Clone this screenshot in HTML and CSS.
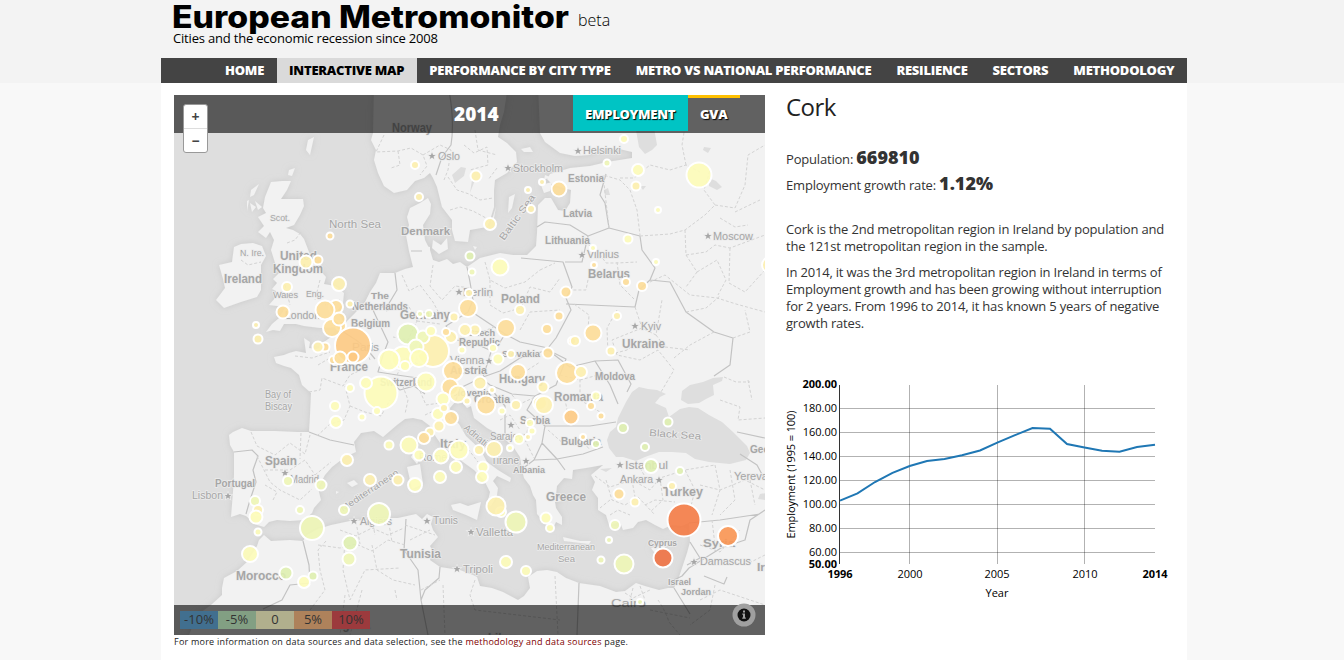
FILE: index.html
```html
<!DOCTYPE html>
<html lang="en">
<head>
<meta charset="utf-8">
<title>European Metromonitor</title>
<link rel="stylesheet" href="styles.css">
</head>
<body>
<header class="site-header">
  <div class="wrap brand">
    <div class="brand-row">
      <svg class="logo" width="400" height="36" viewBox="0 0 400 36"><text x="0" y="27.500" textLength="397" lengthAdjust="spacingAndGlyphs">European Metromonitor</text></svg>
      <span class="beta">beta</span>
    </div>
    <div class="tagline">Cities and the economic recession since 2008</div>
  </div>
  <nav class="wrap nav">
    <a>HOME</a><a class="active">INTERACTIVE MAP</a><a>PERFORMANCE BY CITY TYPE</a><a>METRO VS NATIONAL PERFORMANCE</a><a>RESILIENCE</a><a>SECTORS</a><a>METHODOLOGY</a>
  </nav>
</header>
<main class="wrap content">
  <section class="map-col">
    <div class="map">
      <svg class="map-svg" width="591" height="540" viewBox="174 95 591 540">
        <defs><filter id="coast" x="-5%" y="-5%" width="110%" height="110%"><feDropShadow dx="0" dy="0" stdDeviation="3" flood-color="#c4c4c4" flood-opacity=".8"/></filter></defs>
        <rect x="174" y="95" width="591" height="540" class="sea"/>
        <g class="land" filter="url(#coast)">
          <path d="M780 85H538L540 133 545 142 560 153 575 156 589 155 600 150 615 148 632 152 632 158 607 162 590 166 570 168 550 174 547 179 552 184 560 187 571 190 570 203 565 211 558 210 551 198 545 198 538 205 537 233 536 246 527 255 513 255 500 253 480 258 467 267 460 262 453 264 447 259 439 262 433 260 430 250 425 240 423 225 430 214 431 204 428 198 420 203 410 208 407 217 409 225 406 235 409 251 413 267 405 269 395 273 380 273 376 283 370 292 365 302 356 312 344 324 342 331 331 337 324 342 326 346 316 349 309 348 310 342 304 338 306 353 296 351 289 353 284 355 274 357 276 363 284 366 291 368 299 375 302 385 311 393 310 415 309 432 297 432 275 431 251 431 242 428 233 432 229 435 230 445 234 452 234 475 233 492 231 517 240 514 246 516 252 521 257 525 264 527 269 522 277 520 290 521 304 520 312 513 314 508 321 500 318 488 325 475 332 467 345 457 356 452 354 442 361 433 374 431 383 437 390 431 397 425 405 419 413 418 422 420 430 426 436 437 443 447 452 453 463 462 474 470 484 480 490 492 487 505 491 506 497 495 498 488 493 481 497 476 510 482 511 478 498 470 487 462 480 449 466 436 459 424 451 417 450 408 456 401 462 402 467 408 471 406 474 418 487 428 503 437 514 448 520 457 522 470 524 478 530 486 533 495 536 500 537 514 546 524 553 528 556 522 562 525 562 517 556 508 555 502 562 501 556 495 557 486 564 478 572 479 573 470 586 468 603 465 597 470 591 475 595 482 592 490 598 498 598 510 606 515 609 525 620 522 623 530 633 528 638 522 646 520 655 525 663 529 672 525 682 526 689 523 690 542 687 553 684 562 679 577 674 588 668 588 659 590 645 586 636 583 625 591 616 592 600 586 579 583 566 578 557 572 547 570 537 571 528 577 530 588 524 596 518 600 503 592 492 588 480 586 477 577 473 575 460 570 440 567 430 560 433 552 430 546 438 537 433 530 431 524 433 517 427 514 422 519 416 514 407 516 398 518 390 518 370 520 350 521 331 525 318 529 307 535 303 541 290 540 271 541 264 535 259 540 257 546 247 562 237 571 224 578 222 588 222 595 211 605 197 615 187 640H780Z"/>
          <path d="M374 85 373 133 371 140 376 150 374 160 378 173 384 186 394 193 407 190 415 181 424 178 430 173 433 178 437 187 442 207 452 220 452 230 455 241 468 242 470 230 487 227 491 217 494 207 494 190 495 180 507 173 517 162 516 152 507 143 498 137 500 125 504 112 508 85Z"/>
          <path d="M271 182 282 181 291 181 287 190 281 199 294 199 303 199 304 206 300 215 294 225 286 228 293 230 300 234 304 239 309 252 317 267 326 277 324 284 335 286 344 293 343 303 337 311 342 319 340 327 320 328 304 326 296 324 284 324 280 331 273 330 266 332 272 324 279 318 285 308 277 306 269 305 275 298 276 291 272 289 277 283 273 279 280 272 276 266 271 250 274 240 270 232 266 238 258 232 264 226 258 217 266 213 263 208 265 197Z"/>
          <path d="M234 247 241 244 253 243 262 246 266 256 261 265 261 290 257 297 241 302 224 308 216 300 225 288 223 279 219 265 232 262Z"/>
          <path d="M451 505 460 503 468 506 481 502 477 520 466 515 453 510ZM407 467 420 464 423 484 412 489ZM418 447 421 456 417 464 411 457ZM433 240 441 245 447 238 448 249 439 254 432 248ZM424 246 430 247 430 253 424 252ZM509 197 515 194 512 208 508 213ZM496 207 494 218 491 223ZM563 537 580 541 591 541 589 544 564 541ZM651 548 660 546 670 542 662 551 654 552ZM347 483 354 480 358 484 352 487ZM336 491 339 492 336 494ZM308 140 314 137 310 155 306 150ZM289 170 295 168 292 176 288 175ZM251 190 259 184 254 195 250 197ZM247 201 249 200 247 211ZM255 201 262 207 258 210ZM521 149 530 147 533 152 524 152ZM545 175 550 177 544 180ZM541 185 552 182 550 191 544 193ZM473 246 477 247 475 250ZM250 203 256 207 252 212Z"/>
        </g>
        <g class="sea">
          <path d="M639 387 632 392 626 402 622 410 618 418 616 427 610 432 607 440 609 448 616 457 623 457 636 461 645 457 659 452 672 452 686 453 695 459 709 462 730 464 746 460 750 453 747 446 733 432 722 422 709 415 698 408 689 407 680 409 669 417 666 408 655 403 660 397 666 394 657 390 648 389Z"/>
          <path d="M681 400 682 391 690 385 703 382 713 378 723 377 722 381 713 385 714 395 706 399 699 403 688 404Z"/>
          <path d="M636 130 654 128 657 145 652 150 645 154 639 147ZM704 147 711 148 708 153 703 150ZM709 178 716 181 722 187 717 190 709 186ZM640 186 646 186 643 190ZM452 175 461 167 466 168 464 176 455 183ZM472 180 475 180 470 193ZM600 469 612 468 606 472ZM604 190 608 188 610 195 605 195ZM760 494 766 493 766 500 758 499Z"/>
        </g>
        <g class="border">
          <path d="M448 85Q455 120 451 145L442 157 436 175M234 452 252 450 258 456 253 470 256 482 250 500 246 514M309 432 330 440 354 445M342 331 356 340 366 348 375 359M373 310 380 325 388 342 383 355 378 372 397 375 418 378M395 273 397 290 388 305 373 310M411 251H422M467 267 470 282 473 300 468 312 446 326 457 340 476 344 494 352 505 334 481 318 472 312M505 334 520 342 548 348M548 348 556 338 571 310 566 298 572 287 563 262 521 258M537 227 545 222 570 225 588 236 609 228 605 203 600 195 606 174M609 228 640 236 642 250 655 268 650 280 639 290 635 307 590 305 566 304M650 280 670 282 686 312 714 332 733 338 730 365 714 376M588 236 582 262 565 262M383 377 400 390 414 386 425 394M456 400 460 388 483 377 491 352M483 377 500 371 520 358 548 350 566 359 556 385 535 396 512 394 490 385 480 377M548 350 570 367 595 361 610 385 618 404M595 361 618 360 631 384 627 392M535 396 527 410 545 426 590 426 616 422M545 426 542 443 557 459 583 454 603 447M542 443 534 460 522 469M534 460 557 459 565 470M491 389 505 406 505 436M303 541 309 565 310 583 290 585 282 600 263 609M406 519 404 550 418 570 421 600 428 635M440 567 439 578 425 590 421 600M579 583 577 635M674 588 690 614M674 580 682 576 689 568 721 548 745 540 750 520 765 510M689 523 720 520 760 514M704 576 724 584 727 577M737 432 765 438M740 454 757 465 765 480M690 542 700 558 687 565"/>
        </g>
        <g class="region">
          <path d="M384 135 376 152 398 151 411 148 423 155 427 166 420 175M398 151 400 165 391 168M423 155 440 145 451 150 448 170 444 180M475 130 478 150 497 155M464 145 474 153 487 147 488 165 470 170M448 177 457 190 469 194 480 200 493 198M450 210 460 207 473 211 486 218M497 168 488 180"/>
          <path d="M609 228 603 175 620 180 630 190 637 210 640 235M620 178 634 178 650 165 670 170 686 165 700 172M686 165 682 145 686 120M640 236 670 234 685 230 705 215 715 205 704 190 710 170M685 230 686 255 706 252 715 245 730 248 765 235M686 255 697 272 686 287M730 248 729 283 745 292 765 270M697 272 717 260 726 280 718 295M715 205 735 208 745 185 748 155 765 145M735 212 760 200M720 218 735 227 748 225"/>
          <path d="M650 282 665 275 690 295 717 298 736 304 765 312M686 312 706 308 720 296M714 332 690 345 674 358M733 338 750 332 745 310M635 307 642 328 656 335 662 300M656 335 665 347 690 350M642 328 612 340 617 355 640 360 658 350 674 370 661 392M617 310 607 328 608 355 627 350 640 340M574 304 589 315 588 330M724 377 736 382 750 382M720 400 740 407 738 420 765 418M748 380 752 400"/>
          <path d="M309 392 320 390 322 378 343 386 350 375 361 370M318 365 335 355 353 361M345 386 350 406 344 420 330 424 317 436M350 406 365 412 381 416 390 400M366 348 370 360M295 356 312 358 330 352M251 432 257 446 275 455 290 443 305 454 310 435M257 456 270 482 280 490 300 500 312 489M265 470 290 470 305 460 315 475M273 500 277 492 265 485M301 433 300 459M315 475 331 462"/>
          <path d="M402 275 409 291 420 285 433 302 440 315M433 265 430 286 442 300 455 286 470 288M386 311 408 305 417 321 408 340 393 337M417 321 440 324M485 262 490 280 505 288 525 282 540 270M490 280 490 305 503 313 521 308 530 287 550 292 560 278M540 270 555 263M520 330 530 312 560 310M397 375 405 358 420 365 430 360M463 342 466 330 480 333 498 325M401 381 408 400 405 414M420 391 426 405 440 403M425 415 440 408 450 420M450 445 465 445 478 462"/>
          <path d="M505 380 520 375 540 362M512 395 520 404 535 397M560 375 580 380 580 395 565 400 570 423M580 380 598 375M580 400 600 412M548 430 565 445 580 438 590 450M530 420 525 440 534 458M500 420 510 415 520 430M580 240 597 250 606 263 617 263 637 262M590 270 586 290 572 290M617 262 620 285 635 300"/>
          <path d="M595 476 610 487 632 480 650 490 660 478 685 470 715 465M606 480 612 500 625 505 638 497 655 515M632 480 635 497M660 478 663 500 650 512M685 470 695 490 690 510M700 485 720 490 745 480 765 490M715 465 720 490 712 515M610 500 600 508M640 468 647 480M645 505 655 500 675 502M730 470 735 500 720 515M750 480 755 505M610 515 618 510 630 515M700 545 720 552 740 530M712 520 715 545M720 560 745 565 765 555M700 600 720 590 765 605"/>
          <path d="M326 541 318 550 320 570 325 590 310 610M345 540 343 570 350 600 365 570 400 568M318 545 340 548 356 544 372 551 388 540 405 545M340 530 356 536 372 528 388 535 404 528M356 522 360 544M372 520 375 535M388 518 392 542M372 545 377 570 393 580 415 585M345 595 340 635M443 585 445 635M475 580 470 595 475 610 560 620M555 576 558 635M421 590 440 580M395 590 397 600M185 620H250M405 525 435 535M410 540 430 530M633 588 630 600M640 586 645 600M625 593 633 598 650 590M715 585 710 610 690 625M650 610 690 618M362 590 350 635"/>
          <path d="M287 243 295 240 301 232M241 260 248 265 261 262M285 285 290 305M320 280 315 300M340 300 325 305"/>
        </g>
        <path class="region" d="M658 600Q665 610 669 622L680 635"/>
        <g id="labels" class="labels"></g>
        <g id="bubbles" class="bubbles"></g>
      </svg>
      <div class="topbar">
        <span class="year">2014</span>
        <div class="tabs"><a class="tab tab-on">EMPLOYMENT</a><a class="tab tab-gva">GVA</a></div>
      </div>
      <div class="zoom"><a>+</a><a>−</a></div>
      <div class="bottombar">
        <div class="legend"><span class="l1">-10%</span><span class="l2">-5%</span><span class="l3">0</span><span class="l4">5%</span><span class="l5">10%</span></div>
        <svg class="info" width="24" height="24" viewBox="0 0 24 24"><circle cx="12" cy="12" r="11.5" fill="#a0a0a0"/><circle cx="12" cy="12" r="6.5" fill="#111"/><path d="M11 7.5h2v2h-2zM10.3 10.6H13v4h.8v1.2h-3.6v-1.2h.8v-2.800h-.7z" fill="#a0a0a0"/></svg>
      </div>
    </div>
    <p class="note">For more information on data sources and data selection, see the <a>methodology and data sources</a> page.</p>
  </section>
  <section class="detail">
    <h1>Cork</h1>
    <p class="stat">Population: <b>669810</b></p>
    <p class="stat">Employment growth rate: <b>1.12%</b></p>
    <p class="para first">Cork is the 2nd metropolitan region in Ireland by population and<br>the 121st metropolitan region in the sample.</p>
    <p class="para">In 2014, it was the 3rd metropolitan region in Ireland in terms of<br>Employment growth and has been growing without interruption<br>for 2 years. From 1996 to 2014, it has known 5 years of negative<br>growth rates.</p>
    <svg class="chart" width="400" height="240" viewBox="780 370 400 240">
      <path class="grid" d="M840 408.5H1155M840 432.5H1155M840 456.5H1155M840 480.5H1155M840 504.5H1155M840 528.5H1155M840 552.5H1155M909.5 385V564M997.5 385V564M1084.5 385V564"/>
      <path class="axis" d="M839.5 385V564"/>
      <path class="line" d="M840 500.7 857.5 493.3 875 482 892.5 472.8 909.7 466 927 461 944.500 459 962 455.200 980 450.500 997.300 442.700 1015 435.200 1032.500 428 1050 428.800 1067 444 1084.500 447.500 1102 450.800 1119.500 451.800 1137 447 1155 444.800"/>
      <g class="ticks y"><text x="837" y="388" class="b">200.00</text><text x="837" y="412">180.00</text><text x="837" y="436">160.00</text><text x="837" y="460">140.00</text><text x="837" y="484">120.00</text><text x="837" y="508">100.00</text><text x="837" y="532">80.00</text><text x="837" y="556">60.00</text><text x="837" y="568" class="b">50.00</text></g>
      <g class="ticks x"><text x="840" y="578" class="b">1996</text><text x="910" y="578">2000</text><text x="997" y="578">2005</text><text x="1085" y="578">2010</text><text x="1155" y="578" class="b">2014</text><text x="997" y="597">Year</text><text transform="translate(795 474.500) rotate(-90)" textLength="128">Employment (1995 = 100)</text></g>
    </svg>
  </section>
</main>
<script src="map.js"></script>
</body>
</html>
```
FILE: styles.css
```css
* { box-sizing: border-box; }
body { margin: 0; height: 660px; overflow: hidden; background: #f8f8f8; font-family: "Open Sans", sans-serif; color: #333; }
.wrap { width: 1026px; margin-left: 161px; }
.site-header { background: #f3f3f3; height: 83px; }
.brand { height: 58px; padding-left: 11px; color: #000; }
.brand-row { display: flex; height: 30px; }
.logo { overflow: visible; flex: none; }
.logo text { font: 800 31px Inter, sans-serif; fill: #000; }
.beta { font-size: 16px; font-weight: 300; line-height: 22px; padding: 9px 0 0 6px; }
.tagline { font-size: 13px; line-height: 16px; padding-left: 1px; letter-spacing: -.19px; }
.nav { display: flex; justify-content: flex-end; height: 25px; background: #444; }
.nav a { padding: 0 12.500px; font-size: 13px; line-height: 25px; font-weight: 800; letter-spacing: -.24px; color: #fff; white-space: nowrap; }
.nav .active { background: #dadada; color: #000; }
.content { display: flex; height: 577px; background: #fff; padding: 12px 0 0 13px; }
.map-col { width: 591px; }
.map { position: relative; width: 591px; height: 540px; overflow: hidden; }
.map-svg { display: block; }
.sea { fill: #dedede; }
.land { fill: #f2f2f2; }
.border { fill: none; stroke: #c3c3c3; stroke-width: 1.2; stroke-linejoin: round; }
.region { fill: none; stroke: #d3d3d3; stroke-width: 1; stroke-dasharray: 3 2; }
.labels { font-family: "Liberation Sans", Arial, sans-serif; fill: #a6a6a6; stroke: #ececec; stroke-width: 1.5; paint-order: stroke; }
.bubbles circle { stroke: #fff; stroke-width: 2; fill-opacity: .9; }
.topbar { position: absolute; left: 0; top: 0; width: 591px; height: 38px; background: rgba(0,0,0,.6); color: #fff; display: flex; justify-content: flex-end; }
.year { width: 119px; font-size: 19px; font-weight: 800; line-height: 38px; }
.tabs { display: flex; width: 192px; }
.tab { height: 36px; padding: 0 12px; font-size: 13px; font-weight: 800; line-height: 38px; letter-spacing: -.25px; text-shadow: 1px 1px 1px #000; }
.tab-on { background: #00c4c4; width: 115px; }
.tab-gva { width: 52px; border-top: 3px solid #ffc000; line-height: 32px; }
.zoom { position: absolute; left: 9px; top: 9px; width: 25px; height: 49px; background: #fff; border: 1px solid #999; border-radius: 3px; display: grid; grid-template-rows: 23px 24px; text-align: center; font-size: 14px; font-weight: 700; line-height: 23px; color: #444; }
.zoom a + a { border-top: 1px solid #ddd; }
.bottombar { position: absolute; left: 0; bottom: 0; width: 591px; height: 30px; background: rgba(0,0,0,.6); display: flex; justify-content: space-between; padding: 6px 9px 0 6px; }
.legend { display: flex; height: 18px; font-size: 13px; line-height: 17px; text-align: center; color: #333; }
.legend span { width: 38px; }
.l1 { background: #416f8f; } .l2 { background: #829f83; } .l3 { background: #b1af8d; } .l4 { background: #ae825b; } .l5 { background: #9c3a3d; }
.info { margin-top: -8px; }
.note { margin: 0; font-size: 9px; line-height: 14px; color: #222; white-space: nowrap; letter-spacing: .23px; }
.note a { color: #800000; }
.detail { padding-left: 21px; width: 400px; }
.detail h1 { margin: 0; font-size: 24px; font-weight: 400; line-height: 24px; letter-spacing: -.5px; color: #222; height: 49px; }
.stat { margin: 0; height: 26px; line-height: 26px; font-size: 13px; letter-spacing: -.19px; }
.stat b { font-size: 18px; font-weight: 800; letter-spacing: 0; }
.para { margin: 0 0 9px; font-size: 13px; line-height: 17px; white-space: nowrap; letter-spacing: -.19px; }
.para.first { margin-top: 25px; }
.chart { display: block; margin: 38px 0 0 -6px; overflow: visible; }
.grid { stroke: #000; stroke-opacity: .3; }
.axis { stroke: #333; }
.line { fill: none; stroke: #1f77b4; stroke-width: 2; }
.ticks { font-size: 11px; fill: #000; }
.ticks.y { text-anchor: end; }
.ticks.x { text-anchor: middle; }
.b { font-weight: 700; }
```
FILE: map.js
```js
const NS = "http://www.w3.org/2000/svg";
// Label: text, left x, baseline y, drawn width, font size, bold, rotation
const labels = [
  ["Norway",392,132,40,12,1],["Oslo",438,160,22,11],["Stockholm",513,172,50,11],["Helsinki",583,154,38,11],
  ["Estonia",568,182,36,10,1],["Latvia",563,217,29,10,1],["Lithuania",545,244,45,10,1],["Vilnius",587,258,32,11],
  ["Moscow",713,240,40,11],["Belarus",588,278,42,12,1],["North Sea",329,228,52,10],["Denmark",401,235,49,11,1],
  ["Scot.",270,221,20,9],["N. Ire.",240,256,24,9],["United",280,260,37,12,1],["Kingdom",273,273,50,12,1],["Ireland",224,283,38,12,1],
  ["Wales",273,298,25,9],["Eng.",306,297,18,9],["London",285,319,35,11],["The",371,299,18,9,1],["Netherlands",352,310,56,10,1],
  ["Belgium",351,327,39,10,1],["Paris",352,351,27,11],["France",330,371,38,12,1],["Germany",400,319,50,12,1],["Berlin",463,296,30,10],
  ["Poland",501,303,39,12,1],["Czech",468,336,27,9,1],["Republic",459,346,41,10,1],["Vienna",450,364,34,11],["Austria",450,374,37,10,1],
  ["Slovakia",502,357,38,9,1],["Hungary",499,383,46,12,1],["Switzerland",380,386,52,10,1],["Slovenia",451,396,40,9,1],["Croatia",474,403,36,10,1],
  ["Romania",554,401,49,12,1],["Serbia",520,424,30,10,1],["Bulgaria",561,445,40,10,1],["Moldova",595,380,40,10,1],["Ukraine",622,348,43,12,1],
  ["Kyiv",641,330,20,11],["Sarajevo",490,440,38,11],["Italy",440,448,26,12,1],["Rome",419,461,28,10],["Tirane",491,464,28,10],
  ["Albania",513,473,32,9,1],["Greece",546,501,40,12,1],["Spain",265,465,32,12,1],["Madrid",290,483,29,10],["Portugal",215,487,40,10,1],
  ["Lisbon",192,499,31,11],["Algiers",360,525,32,10],["Morocco",236,580,50,12,1],["Tunis",433,524,25,11],["Tunisia",400,558,41,12,1],
  ["Valletta",476,536,37,11],["Tripoli",463,573,30,11],["Mediterranean",537,550,58,9],["Sea",558,562,17,9],["Istanbul",625,469,43,11],
  ["Ankara",620,483,33,10],["Turkey",663,496,40,12,1],["Cyprus",648,546,29,9,1],["Syria",703,547,32,11,1],["Damascus",700,565,51,11],
  ["Israel",668,585,23,9,1],["Jordan",681,595,30,9,1],["Cairo",611,607,35,11],["Yerevan",734,480,40,10],["Georgia",750,453,38,10,1],
  ["Iraq",757,571,22,11,1],["Algeria",331,629,39,12,1],["Libya",488,642,30,12,1],["Bay of",265,398,26,10],["Biscay",265,410,27,10],
  ["Black Sea",649,436,52,10,0,4],["Baltic Sea",504,241,54,10,0,-54],["Adriatic",463,429,32,10,0,40],["Mediterranean",343,512,68,9,0,-34]
];
const stars = [[432,156],[508,168],[578,151],[582,255],[708,236],[635,326],[459,292],[489,361],[511,425],[285,473],[228,496],[354,521],[427,521],[471,532],[457,569],[526,461],[659,480],[694,562],[620,465]];
// Metro regions: x, y, radius, palette key
const C = {y:"#fdfcb8", p:"#fdefae", o:"#fddd98", n:"#fdca83", g:"#dff0b0", l:"#eef6b6", d:"#f47b45", r:"#ee7143", k:"#f99552"};
const metros = [
  [330,236,2.500,"o"],[318,260,3.500,"o"],[306,262,5.500,"p"],[287,287,4,"p"],[339,284,6,"p"],[256,325,2,"p"],[258,339,3.500,"p"],
  [283,312,5.500,"o"],[336,307,6,"o"],[325,310,8.500,"o"],[350,304,2.500,"p"],[341,326,4,"o"],[332,328,8,"o"],[339,319,5.500,"o"],
  [325,347,3.500,"o"],[318,347,4.500,"p"],[353,345.500,17,"n"],[333,360,3,"o"],[340,358,5.500,"o"],[353,357,4.500,"n"],
  [415,165,3,"p"],[476,176,4.500,"p"],[419,197,3,"p"],[490,224,5,"p"],[542,182,2,"p"],[528,190,2,"p"],[531,209,3,"p"],[559,189,6.500,"o"],
  [624,139,3,"y"],[607,163,2.500,"l"],[638,170,5,"y"],[636,186,3.500,"p"],[658,210,2,"y"],[699,175,11.500,"y"],[628,239,3.500,"y"],
  [593,248,2,"y"],[594,265,2,"o"],[656,262,2,"y"],[626,282,3,"o"],[642,286,4,"o"],[770,265,7,"p"],[470,256,3.500,"g"],[472,272,2.500,"l"],[500,267,7.500,"y"],
  [469,293,3,"p"],[468,308,8,"o"],[420,314,2,"l"],[429,314,3,"l"],[454,317,3.500,"p"],[520,310,4,"p"],[566,292,4.500,"o"],[559,316,3.500,"o"],
  [547,329,4,"o"],[506,328,8,"o"],[475,330,4.500,"p"],[465,330,5,"p"],[451,337,5,"p"],[446,332,3,"o"],[433,351,15,"p"],
  [408,334,9.500,"g"],[423,337,5.500,"l"],[431,331,4,"y"],[403,358,10.500,"y"],[416,347,6.500,"l"],[389,360,9.500,"y"],[419,358,8,"y"],[405,366,4,"y"],
  [462,350,2.500,"y"],[493,348,3,"y"],[498,359,4.500,"y"],[511,354,3,"p"],[548,353,4.500,"o"],[381,393,15.500,"y"],[350,388,3,"y"],[366,383,5,"y"],
  [335,406,4,"y"],[336,422,5,"y"],[362,417,2.500,"y"],[377,411,3,"y"],[426,382,8.500,"y"],[453,371,9,"o"],[480,383,5.500,"p"],[492,390,2,"p"],
  [450,387,7.500,"o"],[458,394,7.500,"p"],[467,401,2.500,"p"],[443,399,5.500,"y"],[438,414,5,"y"],[444,408,3,"p"],[451,418,6,"o"],
  [439,426,4.500,"p"],[430,432,3.500,"p"],[424,438,5,"o"],[389,445,3.500,"y"],[409,445,7.500,"y"],[486,405,8.500,"o"],[516,405,4,"p"],[502,411,2.500,"y"],
  [518,372,7,"o"],[543,387,4.500,"p"],[540,403,6,"p"],[544,405,8,"p"],[567,373,10,"o"],[581,372,5,"p"],[572,341,3,"o"],[575,341,4,"p"],
  [593,333,7.500,"o"],[617,316,3,"p"],[611,351,3.500,"p"],[596,396,3.500,"y"],[591,406,3,"o"],[571,417,6.500,"n"],[601,416,2.500,"o"],
  [530,423,3,"y"],[532,431,2.500,"y"],[528,437,2,"p"],[519,439,4,"y"],[583,437,2,"o"],[596,444,3,"g"],[623,428,4,"g"],[668,422,3.500,"g"],[645,447,3,"g"],
  [419,455,4.500,"y"],[441,456,6.500,"y"],[459,450,8.500,"y"],[479,450,4,"p"],[494,449,7,"p"],[510,448,2,"y"],[456,467,5,"y"],[483,467,4.500,"y"],
  [482,477,5,"y"],[440,477,5,"y"],[398,480,4.500,"p"],[370,480,5,"p"],[415,485,6,"y"],[347,460,5,"p"],[288,481,4,"l"],[321,485,4.500,"l"],
  [255,501,4,"l"],[258,510,4,"p"],[256,517,5.500,"y"],[300,510,3,"l"],[258,532,2.500,"y"],[312,528,11,"l"],[344,510,4,"l"],[379,514,10,"l"],
  [350,543,6.500,"g"],[349,559,5.500,"l"],[250,554,7,"y"],[286,573,5.500,"g"],[313,576,3.500,"g"],[304,582,5,"y"],[501,512,4,"y"],[496,506,8.500,"p"],
  [516,522,9.500,"l"],[546,518,4.500,"y"],[550,528,3,"y"],[506,562,5,"y"],[526,571,4,"y"],[624,564,8.500,"l"],[609,540,2,"l"],[601,560,2.500,"l"],
  [615,525,4,"l"],[619,494,4.500,"o"],[635,502,3.500,"p"],[651,466,6,"g"],[680,471,3,"g"],[672,486,3,"p"],[684,520,15.500,"d"],[663,558,8.500,"r"],
  [728,536,9,"k"],[640,602,2,"l"]
];
function add(id, tag, attrs, text) {
  const el = document.createElementNS(NS, tag);
  for (const k in attrs) el.setAttribute(k, attrs[k]);
  if (text) el.textContent = text;
  document.getElementById(id).appendChild(el);
}
for (const [t, x, y, w, s, b, r] of labels)
  add("labels", "text", {x, y, textLength: w, lengthAdjust: "spacingAndGlyphs", "font-size": s, "font-weight": b ? 700 : 400, transform: `rotate(${r || 0} ${x} ${y})`}, t);
for (const [x, y] of stars)
  add("labels", "path", {transform: `translate(${x} ${y})`, d: "M0-3.500 1-1H3.500L1.500 .6 2.200 3 0 1.500-2.200 3-1.500 .6-3.500-1H-1Z"});
for (const [cx, cy, r, c] of metros)
  add("bubbles", "circle", {cx, cy, r: r + 1, fill: C[c]});
```
